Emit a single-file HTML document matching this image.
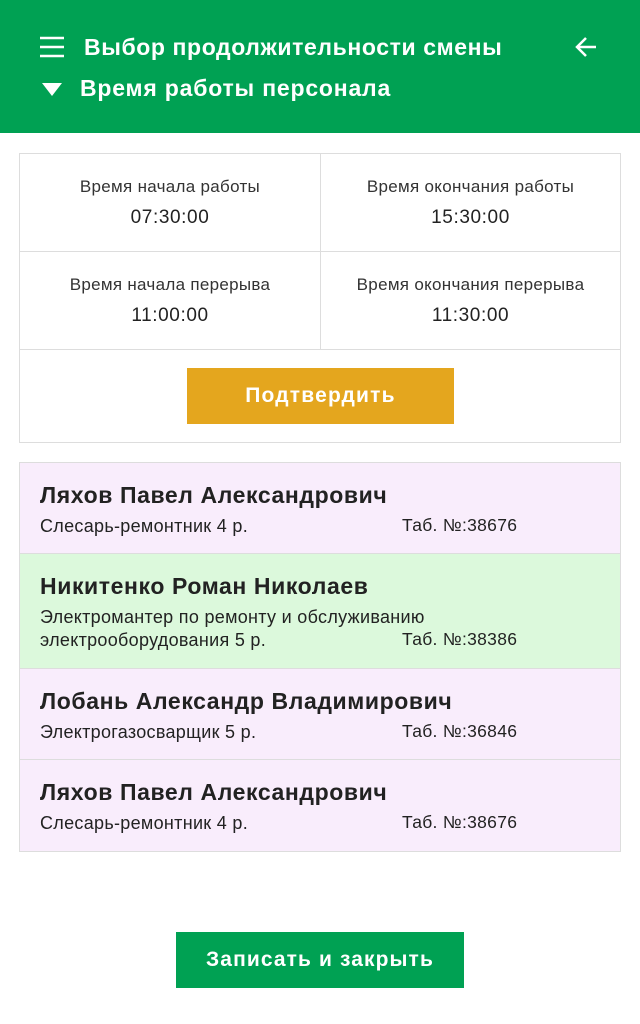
<!DOCTYPE html>
<html><head><meta charset="utf-8"><style>
*{margin:0;padding:0;box-sizing:border-box}
body{width:640px;height:1024px;background:#fff;font-family:"Liberation Sans",sans-serif;position:relative;overflow:hidden;color:#222}
.hdr{position:absolute;left:0;top:0;width:640px;height:133px;background:#00a153;color:#fff}
.t1{position:absolute;left:84px;top:34px;font-size:23px;font-weight:bold;letter-spacing:0.6px}
.t2{position:absolute;left:80px;top:75px;font-size:23px;font-weight:bold;letter-spacing:0.8px}
.card{position:absolute;left:19px;top:153px;width:602px;height:290px;border:1px solid #ddd}
.cell{position:absolute;width:301px;height:98px;text-align:center;border-right:1px solid #ddd;border-bottom:1px solid #ddd}
.cell .l{font-size:17px;color:#333;margin-top:23px;letter-spacing:0.3px}
.cell .v{font-size:19px;color:#222;margin-top:10px;letter-spacing:0.6px}
.btn{position:absolute;left:167px;top:214px;width:267px;height:56px;background:#e4a61e;color:#fff;font-weight:bold;font-size:21px;text-align:center;line-height:56px;letter-spacing:1.2px}
.list{position:absolute;left:19px;top:462px;width:602px;border:1px solid #ddd}
.row{position:relative;border-bottom:1px solid #ddd;padding-left:20px}
.row:last-child{border-bottom:none}
.n{font-size:23px;font-weight:bold;color:#222;position:absolute;left:20px;top:19px;letter-spacing:0.6px;white-space:nowrap}
.s{font-size:18px;color:#222;position:absolute;left:20px;line-height:23px;letter-spacing:0.3px;white-space:nowrap}
.tb{font-size:17.5px;color:#222;position:absolute;left:382px;letter-spacing:0.3px}
.p{background:#f9edfc}.g{background:#dcf9dc}
.bb{position:absolute;left:176px;top:932px;width:288px;height:56px;background:#00a153;color:#fff;font-weight:bold;font-size:21px;text-align:center;line-height:56px;letter-spacing:1.1px}
</style></head><body>
<div class="hdr">
<svg style="position:absolute;left:40px;top:36px" width="24" height="22"><g stroke="#fff" stroke-width="2.5"><line x1="0" y1="2" x2="24" y2="2"/><line x1="0" y1="11" x2="24" y2="11"/><line x1="0" y1="20" x2="24" y2="20"/></g></svg>
<div class="t1">Выбор продолжительности смены</div>
<svg style="position:absolute;left:575px;top:36px" width="22" height="22"><g stroke="#fff" stroke-width="2.5" fill="none"><line x1="2" y1="11" x2="21" y2="11"/><polyline points="11,2 2,11 11,20"/></g></svg>
<svg style="position:absolute;left:42px;top:83px" width="20" height="14"><polygon points="0,0 20,0 10,13" fill="#fff"/></svg>
<div class="t2">Время работы персонала</div>
</div>
<div class="card">
<div class="cell" style="left:0;top:0"><div class="l">Время начала работы</div><div class="v">07:30:00</div></div>
<div class="cell" style="left:300px;top:0;border-right:none"><div class="l">Время окончания работы</div><div class="v">15:30:00</div></div>
<div class="cell" style="left:0;top:98px"><div class="l">Время начала перерыва</div><div class="v">11:00:00</div></div>
<div class="cell" style="left:300px;top:98px;border-right:none"><div class="l">Время окончания перерыва</div><div class="v">11:30:00</div></div>
<div class="btn">Подтвердить</div>
</div>
<div class="list">
<div class="row p" style="height:91px"><div class="n">Ляхов Павел Александрович</div><div class="s" style="top:52px">Слесарь-ремонтник 4 р.</div><div class="tb" style="top:52px">Таб. №:38676</div></div>
<div class="row g" style="height:115px"><div class="n">Никитенко Роман Николаев</div><div class="s" style="top:52px">Электромантер по ремонту и обслуживанию<br>электрооборудования 5 р.</div><div class="tb" style="top:75px">Таб. №:38386</div></div>
<div class="row p" style="height:91px"><div class="n">Лобань Александр Владимирович</div><div class="s" style="top:52px">Электрогазосварщик 5 р.</div><div class="tb" style="top:52px">Таб. №:36846</div></div>
<div class="row p" style="height:91px"><div class="n">Ляхов Павел Александрович</div><div class="s" style="top:52px">Слесарь-ремонтник 4 р.</div><div class="tb" style="top:52px">Таб. №:38676</div></div>
</div>
<div class="bb">Записать и закрыть</div>
</body></html>
